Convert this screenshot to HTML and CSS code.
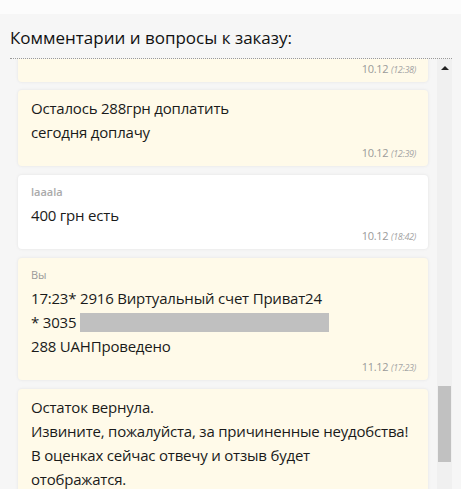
FILE: index.html
```html
<!DOCTYPE html>
<html lang="ru">
<head>
<meta charset="utf-8">
<title>Комментарии</title>
<link rel="stylesheet" href="styles.css">
</head>
<body>
<div class="topbar"></div>
<section class="section">
  <h2 class="title">Комментарии и вопросы к заказу:</h2>
  <div class="comments">
    <div class="list">
      <div class="card yellow cut">
        <div class="date">10.12 <i>(12:38)</i></div>
      </div>
      <div class="card yellow">
        <div class="text">Осталось 288грн доплатить<br>сегодня доплачу</div>
        <div class="date">10.12 <i>(12:39)</i></div>
      </div>
      <div class="card white">
        <div class="name bold">laaala</div>
        <div class="text">400 грн есть</div>
        <div class="date">10.12 <i>(18:42)</i></div>
      </div>
      <div class="card yellow">
        <div class="name">Вы</div>
        <div class="text">17:23* 2916 Виртуальный счет Приват24<br>* 3035 <span class="hidden-box"></span><br>288 UAHПроведено</div>
        <div class="date">11.12 <i>(17:23)</i></div>
      </div>
      <div class="card yellow">
        <div class="text">Остаток вернула.<br>Извините, пожалуйста, за причиненные неудобства!<br>В оценках сейчас отвечу и отзыв будет<br>отображатся.</div>
      </div>
    </div>
    <div class="scrollbar">
      <div class="arrow"></div>
      <div class="thumb"></div>
    </div>
  </div>
</section>
</body>
</html>
```

FILE: styles.css
```css
html, body {
  margin: 0;
  padding: 0;
}
body {
  background: #f6f6f6;
  font-family: "Open Sans", "Noto Sans", sans-serif;
  color: #1a1a1a;
  height: 489px;
  overflow: hidden;
}
.topbar {
  height: 14px;
  background: #fcfcfc;
}
.section {
  padding: 0 9px 0 10px;
}
.title {
  margin: 0;
  padding: 12px 0 8px;
  font-size: 17px;
  line-height: 24px;
  font-weight: 400;
  color: #111;
  border-bottom: 1px dotted #9a9a9a;
}
.comments {
  display: flex;
  height: 430px;
  overflow: hidden;
}
.list {
  flex: 1;
  padding: 0 8px;
  display: flex;
  flex-direction: column;
  gap: 9px;
}
.card {
  border-radius: 4px;
  padding: 6px 12px 3px 13px;
  box-shadow: 0 0 2px 1px #ececec;
}
.card.cut {
  padding-top: 1px;
  border-radius: 0 0 4px 4px;
  margin-bottom: -1px;
}
.yellow { background: #fffae9; }
.white { background: #ffffff; }
.text {
  font-size: 15px;
  line-height: 24px;
  letter-spacing: -0.2px;
  color: #1a1a1a;
}
.name {
  font-size: 11px;
  line-height: 22px;
  color: #999;
}
.name.bold {
  font-weight: 600;
  color: #aaa;
}
.date {
  text-align: right;
  font-size: 11px;
  line-height: 18px;
  letter-spacing: -0.3px;
  color: #9a9a9a;
}
.date i {
  font-size: 9px;
  color: #a5a5a5;
}
.hidden-box {
  display: inline-block;
  width: 249px;
  height: 19px;
  background: #c0c0c0;
  vertical-align: -4px;
}
.scrollbar {
  width: 15px;
  margin-left: 1px;
  background: #f0f0f0;
  display: flex;
  flex-direction: column;
  align-items: center;
}
.arrow {
  margin-top: 7px;
  width: 0;
  height: 0;
  border-left: 4px solid transparent;
  border-right: 4px solid transparent;
  border-bottom: 4px solid #222;
}
.thumb {
  margin-top: 316px;
  width: 13px;
  height: 76px;
  background: #c1c1c1;
}
```
